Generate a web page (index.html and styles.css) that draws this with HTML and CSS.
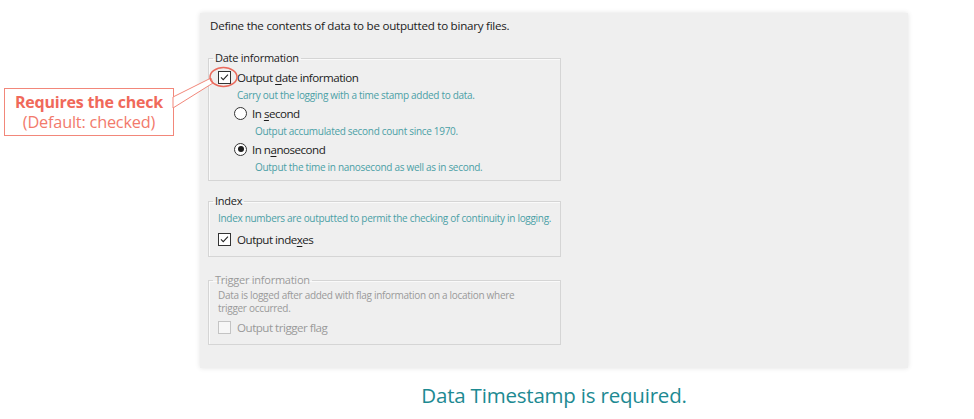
FILE: index.html
```html
<!DOCTYPE html>
<html lang="en">
<head>
<meta charset="utf-8">
<title>Binary file output settings</title>
<link rel="stylesheet" href="styles.css">
</head>
<body>
<div class="page">
  <div class="panel">
    <p class="intro">Define the contents of data to be outputted to binary files.</p>

    <fieldset class="group group-date">
      <legend>Date information</legend>
      <label class="row check-row">
        <span class="box checked"><svg viewBox="0 0 13 13"><path d="M2.3 6.4 L5 9.1 L10.6 3.2" fill="none" stroke="#222" stroke-width="1.2"/></svg></span>
        <span class="label">Output <u>d</u>ate information</span>
      </label>
      <p class="desc indent1">Carry out the logging with a time stamp added to data.</p>
      <label class="row radio-row">
        <span class="radio"></span>
        <span class="label">In <u>s</u>econd</span>
      </label>
      <p class="desc indent2">Output accumulated second count since 1970.</p>
      <label class="row radio-row">
        <span class="radio selected"></span>
        <span class="label">In n<u>a</u>nosecond</span>
      </label>
      <p class="desc indent2">Output the time in nanosecond as well as in second.</p>
    </fieldset>

    <fieldset class="group group-index">
      <legend>Index</legend>
      <p class="desc">Index numbers are outputted to permit the checking of continuity in logging.</p>
      <label class="row check-row">
        <span class="box checked"><svg viewBox="0 0 13 13"><path d="M2.3 6.4 L5 9.1 L10.6 3.2" fill="none" stroke="#222" stroke-width="1.2"/></svg></span>
        <span class="label">Output inde<u>x</u>es</span>
      </label>
    </fieldset>

    <fieldset class="group group-trigger disabled">
      <legend>Trigger information</legend>
      <p class="desc two-line"><span class="line">Data is logged after added with flag information on a location where</span><span class="line">trigger occurred.</span></p>
      <label class="row check-row">
        <span class="box"></span>
        <span class="label">Output trigger flag</span>
      </label>
    </fieldset>
  </div>

  <p class="caption">Data Timestamp is required.</p>

  <div class="callout">
    <span class="callout-title">Requires the check</span>
    <span class="callout-sub">(Default: checked)</span>
  </div>
  <svg class="pointer" viewBox="0 0 240 80" width="240" height="80">
    <polygon points="173,37 211,18 213,23 173,48" fill="#fff" stroke="#f2877a" stroke-width="1"/>
    <ellipse cx="223.5" cy="17" rx="13.5" ry="9.5" fill="none" stroke="#ea6a5c" stroke-width="1.5"/>
  </svg>
</div>
</body>
</html>
```

FILE: styles.css
```css
* { box-sizing: border-box; }

body {
  margin: 0;
  background: #ffffff;
  font-family: "Open Sans", "Noto Sans", "DejaVu Sans", sans-serif;
  color: #1c1c1c;
}

.page {
  position: relative;
  width: 974px;
  height: 419px;
  padding-top: 13px;
}

.panel {
  margin-left: 200px;
  width: 708px;
  height: 355px;
  background: #efefef;
  box-shadow: 0 0 5px rgba(0, 0, 0, 0.12);
  padding: 5px 347px 0 8px;
}

.intro {
  margin: 0 0 0 2px;
  font-size: 11.6px;
  letter-spacing: -0.25px;
  line-height: 16px;
}

.group {
  margin: 0;
  border: 1px solid #d5d5d5;
  box-shadow: inset 1px 1px 0 #fafafa;
  padding: 0 6px 5px 9px;
  min-width: 0;
}

.group legend {
  margin-left: -5px;
  padding: 0 2px;
  font-size: 11px;
  letter-spacing: -0.25px;
  line-height: 14px;
  color: #222;
}

.group-date { margin-top: 17px; padding-top: 3px; padding-bottom: 4px; }
.group-index { margin-top: 13px; padding-top: 1px; padding-bottom: 8px; }
.group-trigger { margin-top: 16px; padding-top: 2px; padding-bottom: 8px; }

.row {
  display: flex;
  align-items: center;
  height: 18px;
  font-size: 11.6px;
  letter-spacing: -0.5px;
}

.check-row .label { margin-left: 6px; }
.radio-row { margin-left: 16px; }
.radio-row .label { margin-left: 5px; }

.label u { text-decoration-thickness: 1px; text-underline-offset: 2px; }

.box {
  width: 13px;
  height: 13px;
  border: 1px solid #333;
  background: #fff;
  flex: none;
  display: flex;
}
.box svg { width: 11px; height: 11px; }

.radio {
  width: 13px;
  height: 13px;
  border: 1px solid #333;
  border-radius: 50%;
  background: #fff;
  flex: none;
  display: flex;
  align-items: center;
  justify-content: center;
}
.radio.selected::after {
  content: "";
  width: 6px;
  height: 6px;
  border-radius: 50%;
  background: #1c1c1c;
}

.desc {
  margin: 0;
  font-size: 10px;
  letter-spacing: -0.3px;
  line-height: 18px;
  color: #4b9fa6;
  white-space: nowrap;
}
.indent1 { margin-left: 19px; }
.indent2 { margin-left: 37px; }

.group-index .row { margin-top: 3px; }

.disabled legend,
.disabled .desc,
.disabled .label { color: #9a9a9a; }
.disabled .desc .line { display: block; line-height: 13px; }
.disabled .row { margin-top: 3px; }
.disabled .box { border-color: #c4c4c4; background: #f7f7f7; }

.caption {
  margin: 14px 0 0 200px;
  width: 708px;
  text-align: center;
  font-size: 20.5px;
  letter-spacing: -0.2px;
  line-height: 26px;
  color: #1d8a92;
}

.callout {
  position: absolute;
  left: 4px;
  top: 88px;
  width: 170px;
  height: 48px;
  border: 1px solid #f2877a;
  background: #fff;
  display: flex;
  flex-direction: column;
  align-items: center;
  justify-content: center;
  line-height: 20px;
  color: #f0695a;
}
.callout-title { font-weight: 700; font-size: 16px; letter-spacing: -0.2px; }
.callout-sub { font-size: 16.3px; letter-spacing: -0.2px; color: #f27a6c; }

.pointer {
  position: absolute;
  left: 0;
  top: 60px;
  overflow: visible;
}
```
